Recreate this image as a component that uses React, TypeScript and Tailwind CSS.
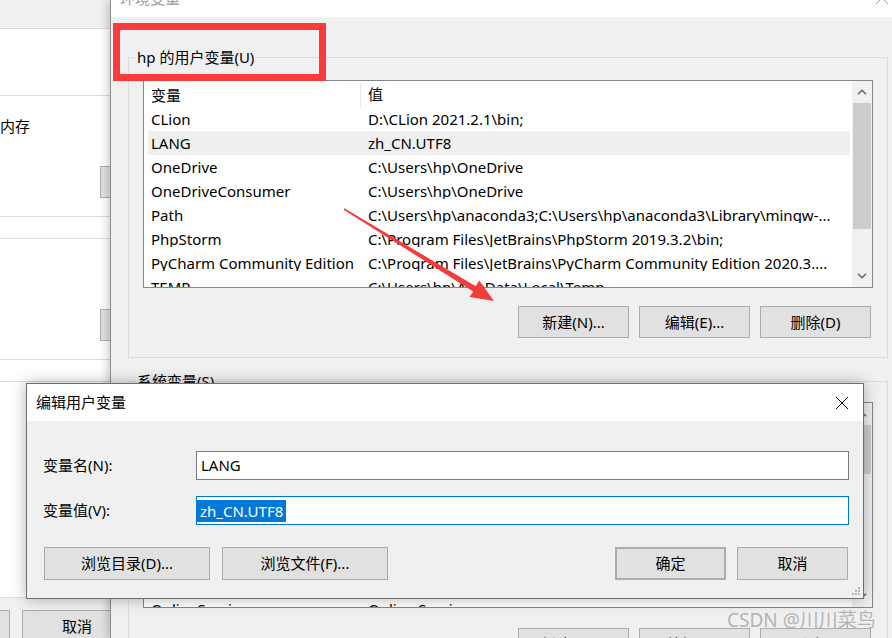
import React from "react";

const userVars: [string, string][] = [
  ["CLion", "D:\\CLion 2021.2.1\\bin;"],
  ["LANG", "zh_CN.UTF8"],
  ["OneDrive", "C:\\Users\\hp\\OneDrive"],
  ["OneDriveConsumer", "C:\\Users\\hp\\OneDrive"],
  ["Path", "C:\\Users\\hp\\anaconda3;C:\\Users\\hp\\anaconda3\\Library\\mingw-..."],
  ["PhpStorm", "C:\\Program Files\\JetBrains\\PhpStorm 2019.3.2\\bin;"],
  ["PyCharm Community Edition", "C:\\Program Files\\JetBrains\\PyCharm Community Edition 2020.3...."],
  ["TEMP", "C:\\Users\\hp\\AppData\\Local\\Temp"],
];

const systemVars: [string, string][] = [
  ["ComSpec", "C:\\Windows\\system32\\cmd.exe"],
  ["DriverData", "C:\\Windows\\System32\\Drivers\\DriverData"],
  ["JAVA_HOME", "C:\\Program Files\\Java\\jdk1.8.0_251"],
  ["MAVEN_HOME", "D:\\apache-maven-3.6.3"],
  ["NUMBER_OF_PROCESSORS", "8"],
  ["NVM_HOME", "C:\\Users\\hp\\AppData\\Roaming\\nvm"],
  ["NVM_SYMLINK", "C:\\Program Files\\nodejs"],
  ["OnlineServices", "Online Services"],
];

function Chevron({ up }: { up?: boolean }) {
  return (
    <svg width="10" height="6" viewBox="0 0 10 6">
      <path
        d={up ? "M1 5.2 L5 1.2 L9 5.2" : "M1 0.8 L5 4.8 L9 0.8"}
        fill="none"
        stroke="#606060"
        strokeWidth="1.4"
      />
    </svg>
  );
}

function ListBox({
  rows,
  selected,
  className,
  thumbClass,
}: {
  rows: [string, string][];
  selected?: number;
  className: string;
  thumbClass: string;
}) {
  return (
    <div className={`flex border border-[#828790] bg-white overflow-hidden ${className}`}>
      <div className="flex-1 min-w-0 pl-[4px] pr-[2px] overflow-hidden whitespace-nowrap">
        <div className="flex h-[26px]">
          <div className="w-[213px] shrink-0 pl-[3px] mt-[2px] flex items-center border-r border-[#e5e5e5]">变量</div>
          <div className="pl-[7px] flex items-center">值</div>
        </div>
        {rows.map(([name, value], i) => (
          <div
            key={name}
            className={`flex h-[24px] items-center ${i === selected ? "bg-[#efefef]" : ""}`}
          >
            <div className="w-[213px] shrink-0 pl-[3px] overflow-hidden">{name}</div>
            <div className="pl-[7px] overflow-hidden">{value}</div>
          </div>
        ))}
      </div>
      <div className="w-[20px] shrink-0 bg-[#f0f0f0] flex flex-col">
        <div className="h-[22px] flex items-center justify-center">
          <Chevron up />
        </div>
        <div className="flex-1 px-[1px]">
          <div className={`bg-[#cdcdcd] ${thumbClass}`} />
        </div>
        <div className="h-[22px] flex items-center justify-center">
          <Chevron />
        </div>
      </div>
    </div>
  );
}

function Btn({ children, className = "" }: { children?: React.ReactNode; className?: string }) {
  return (
    <div
      className={`shrink-0 bg-[#e1e1e1] border border-[#adadad] flex items-center justify-center ${className}`}
    >
      {children}
    </div>
  );
}

function LeftPanel() {
  return (
    <div className="w-[110px] shrink-0 flex flex-col overflow-hidden bg-white">
      <div className="h-[29px] shrink-0 bg-[#f0f0f0] border-b border-[#dcdcdc]" />
      <div className="h-[67px] shrink-0 border-b border-[#dcdcdc]" />
      <div className="h-[121px] shrink-0 border-b border-[#dcdcdc] pt-[20px] flex flex-col">
        <div className="h-[20px] leading-[20px] whitespace-nowrap">内存</div>
        <Btn className="mt-[30px] ml-[100px] w-[40px] h-[32px]" />
      </div>
      <div className="h-[22px] shrink-0 border-b border-[#dcdcdc]" />
      <div className="h-[121px] shrink-0 border-b border-[#dcdcdc] pt-[70px] flex flex-col">
        <Btn className="ml-[100px] w-[40px] h-[32px]" />
      </div>
      <div className="h-[22px] shrink-0 border-b border-[#dcdcdc]" />
      <div className="h-[216px] shrink-0 border-b border-[#dcdcdc]" />
      <div className="flex-1 bg-[#f0f0f0] pt-[12px] flex gap-[12px]">
        <Btn className="w-[10px] h-[32px] border-l-0" />
        <Btn className="w-[110px] h-[32px] pt-[1px]">取消</Btn>
      </div>
    </div>
  );
}

function EnvWindow() {
  return (
    <div className="relative z-10 flex-1 flex flex-col bg-[#f0f0f0] border-l border-[#8f8f8f] shadow-[-3px_0_8px_rgba(0,0,0,0.18)]">
      <div className="h-[17px] shrink-0 bg-white overflow-hidden flex justify-between pl-[9px]">
        <span className="mt-[-9px] h-[15px] text-[#9d9d9d]">环境变量</span>
        <svg width="16" height="16" viewBox="0 0 16 16" className="mt-[-10px] mr-[2px]">
          <path d="M2 2 L14 14 M14 2 L2 14" stroke="#9d9d9d" strokeWidth="1" />
        </svg>
      </div>
      <div className="flex-1 flex flex-col pl-[17px] pt-[40px]">
        <div className="relative w-[760px] shrink-0 border border-[#dcdcdc] px-[14px] pt-[22px] pb-[19px]">
          <div className="absolute left-[7px] top-[-10px] px-[1px] bg-[#f0f0f0] leading-[18px] whitespace-nowrap">
            hp 的用户变量(U)
          </div>
          <ListBox rows={userVars} selected={1} className="h-[208px]" thumbClass="h-[126px]" />
          <div className="flex justify-end gap-[10px] pr-[2px] mt-[18px]">
            <Btn className="w-[111px] h-[32px]">新建(N)...</Btn>
            <Btn className="w-[111px] h-[32px]">编辑(E)...</Btn>
            <Btn className="w-[111px] h-[32px]">删除(D)</Btn>
          </div>
        </div>
        <div className="relative w-[760px] shrink-0 mt-[23px] border border-[#dcdcdc] px-[14px] pt-[20px] pb-[19px]">
          <div className="absolute left-[7px] top-[-10px] px-[1px] bg-[#f0f0f0] leading-[18px] whitespace-nowrap">
            系统变量(S)
          </div>
          <ListBox rows={systemVars} className="h-[206px]" thumbClass="h-[49px]" />
          <div className="flex justify-end gap-[10px] pr-[2px] mt-[20px]">
            <Btn className="w-[111px] h-[32px]">新建(W)...</Btn>
            <Btn className="w-[111px] h-[32px]">编辑(I)...</Btn>
            <Btn className="w-[111px] h-[32px]">删除(L)</Btn>
          </div>
        </div>
      </div>
    </div>
  );
}

function EditDialog() {
  return (
    <div className="absolute z-20 left-[26px] top-[383px] w-[838px] h-[216px] border border-[#6f6f6f] bg-[#f0f0f0] flex flex-col shadow-[0_0_14px_rgba(0,0,0,0.3)]">
      <div className="h-[37px] shrink-0 bg-white flex items-center justify-between pl-[9px] pr-[14px]">
        <span>编辑用户变量</span>
        <svg width="14" height="14" viewBox="0 0 14 14">
          <path d="M1 1 L13 13 M13 1 L1 13" stroke="#000" strokeWidth="1" />
        </svg>
      </div>
      <div className="flex-1 flex flex-col pl-[16px] pr-[14px] pt-[30px]">
        <div className="flex items-center h-[29px]">
          <div className="w-[153px] shrink-0">变量名(N):</div>
          <div className="flex-1 h-full border border-[#7a7a7a] bg-white pl-[4px] flex items-center">LANG</div>
        </div>
        <div className="flex items-center h-[29px] mt-[16px]">
          <div className="w-[153px] shrink-0">变量值(V):</div>
          <div className="flex-1 h-full border border-[#0078d7] bg-white flex items-center">
            <span className="bg-[#0078d7] text-white px-[3px] h-[22px] leading-[22px]">zh_CN.UTF8</span>
          </div>
        </div>
        <div className="flex justify-between mt-[22px] pl-[1px] pr-[1px]">
          <div className="flex gap-[12px]">
            <Btn className="w-[166px] h-[33px]">浏览目录(D)...</Btn>
            <Btn className="w-[166px] h-[33px]">浏览文件(F)...</Btn>
          </div>
          <div className="flex gap-[11px]">
            <Btn className="w-[111px] h-[33px] border-2 border-[#0078d7]">确定</Btn>
            <Btn className="w-[111px] h-[33px]">取消</Btn>
          </div>
        </div>
      </div>
      <svg width="10" height="10" viewBox="0 0 10 10" className="absolute right-[2px] bottom-[2px]">
        <g fill="#b8b8b8">
          <rect x="7" y="1" width="2" height="2" />
          <rect x="4" y="4" width="2" height="2" />
          <rect x="7" y="4" width="2" height="2" />
          <rect x="1" y="7" width="2" height="2" />
          <rect x="4" y="7" width="2" height="2" />
          <rect x="7" y="7" width="2" height="2" />
        </g>
      </svg>
    </div>
  );
}

export default function App() {
  return (
    <div className="relative w-[892px] h-[638px] overflow-hidden flex bg-white text-black text-[15px] leading-none font-['Noto_Sans','Noto_Sans_CJK_SC',sans-serif]">
      <LeftPanel />
      <EnvWindow />
      <EditDialog />

      {/* red annotation box */}
      <div className="absolute z-30 left-[113px] top-[23px] w-[213px] h-[58px] border-[7px] border-[#fb3b3b]" />

      {/* red arrow */}
      <svg width="160" height="102" viewBox="0 0 160 102" className="absolute z-30 left-[340px] top-[204px]">
        <polygon
          points="4.4,4.3 135.8,82.3 139.2,76.6 154,97 129.6,93.1 133.2,87.4 3.6,5.7"
          fill="#f43c3c"
        />
      </svg>

      <div className="absolute z-30 left-[727px] top-[609px] text-[19px] leading-[22px] text-[#b4b4b4] whitespace-nowrap">
        CSDN @川川菜鸟
      </div>
    </div>
  );
}
